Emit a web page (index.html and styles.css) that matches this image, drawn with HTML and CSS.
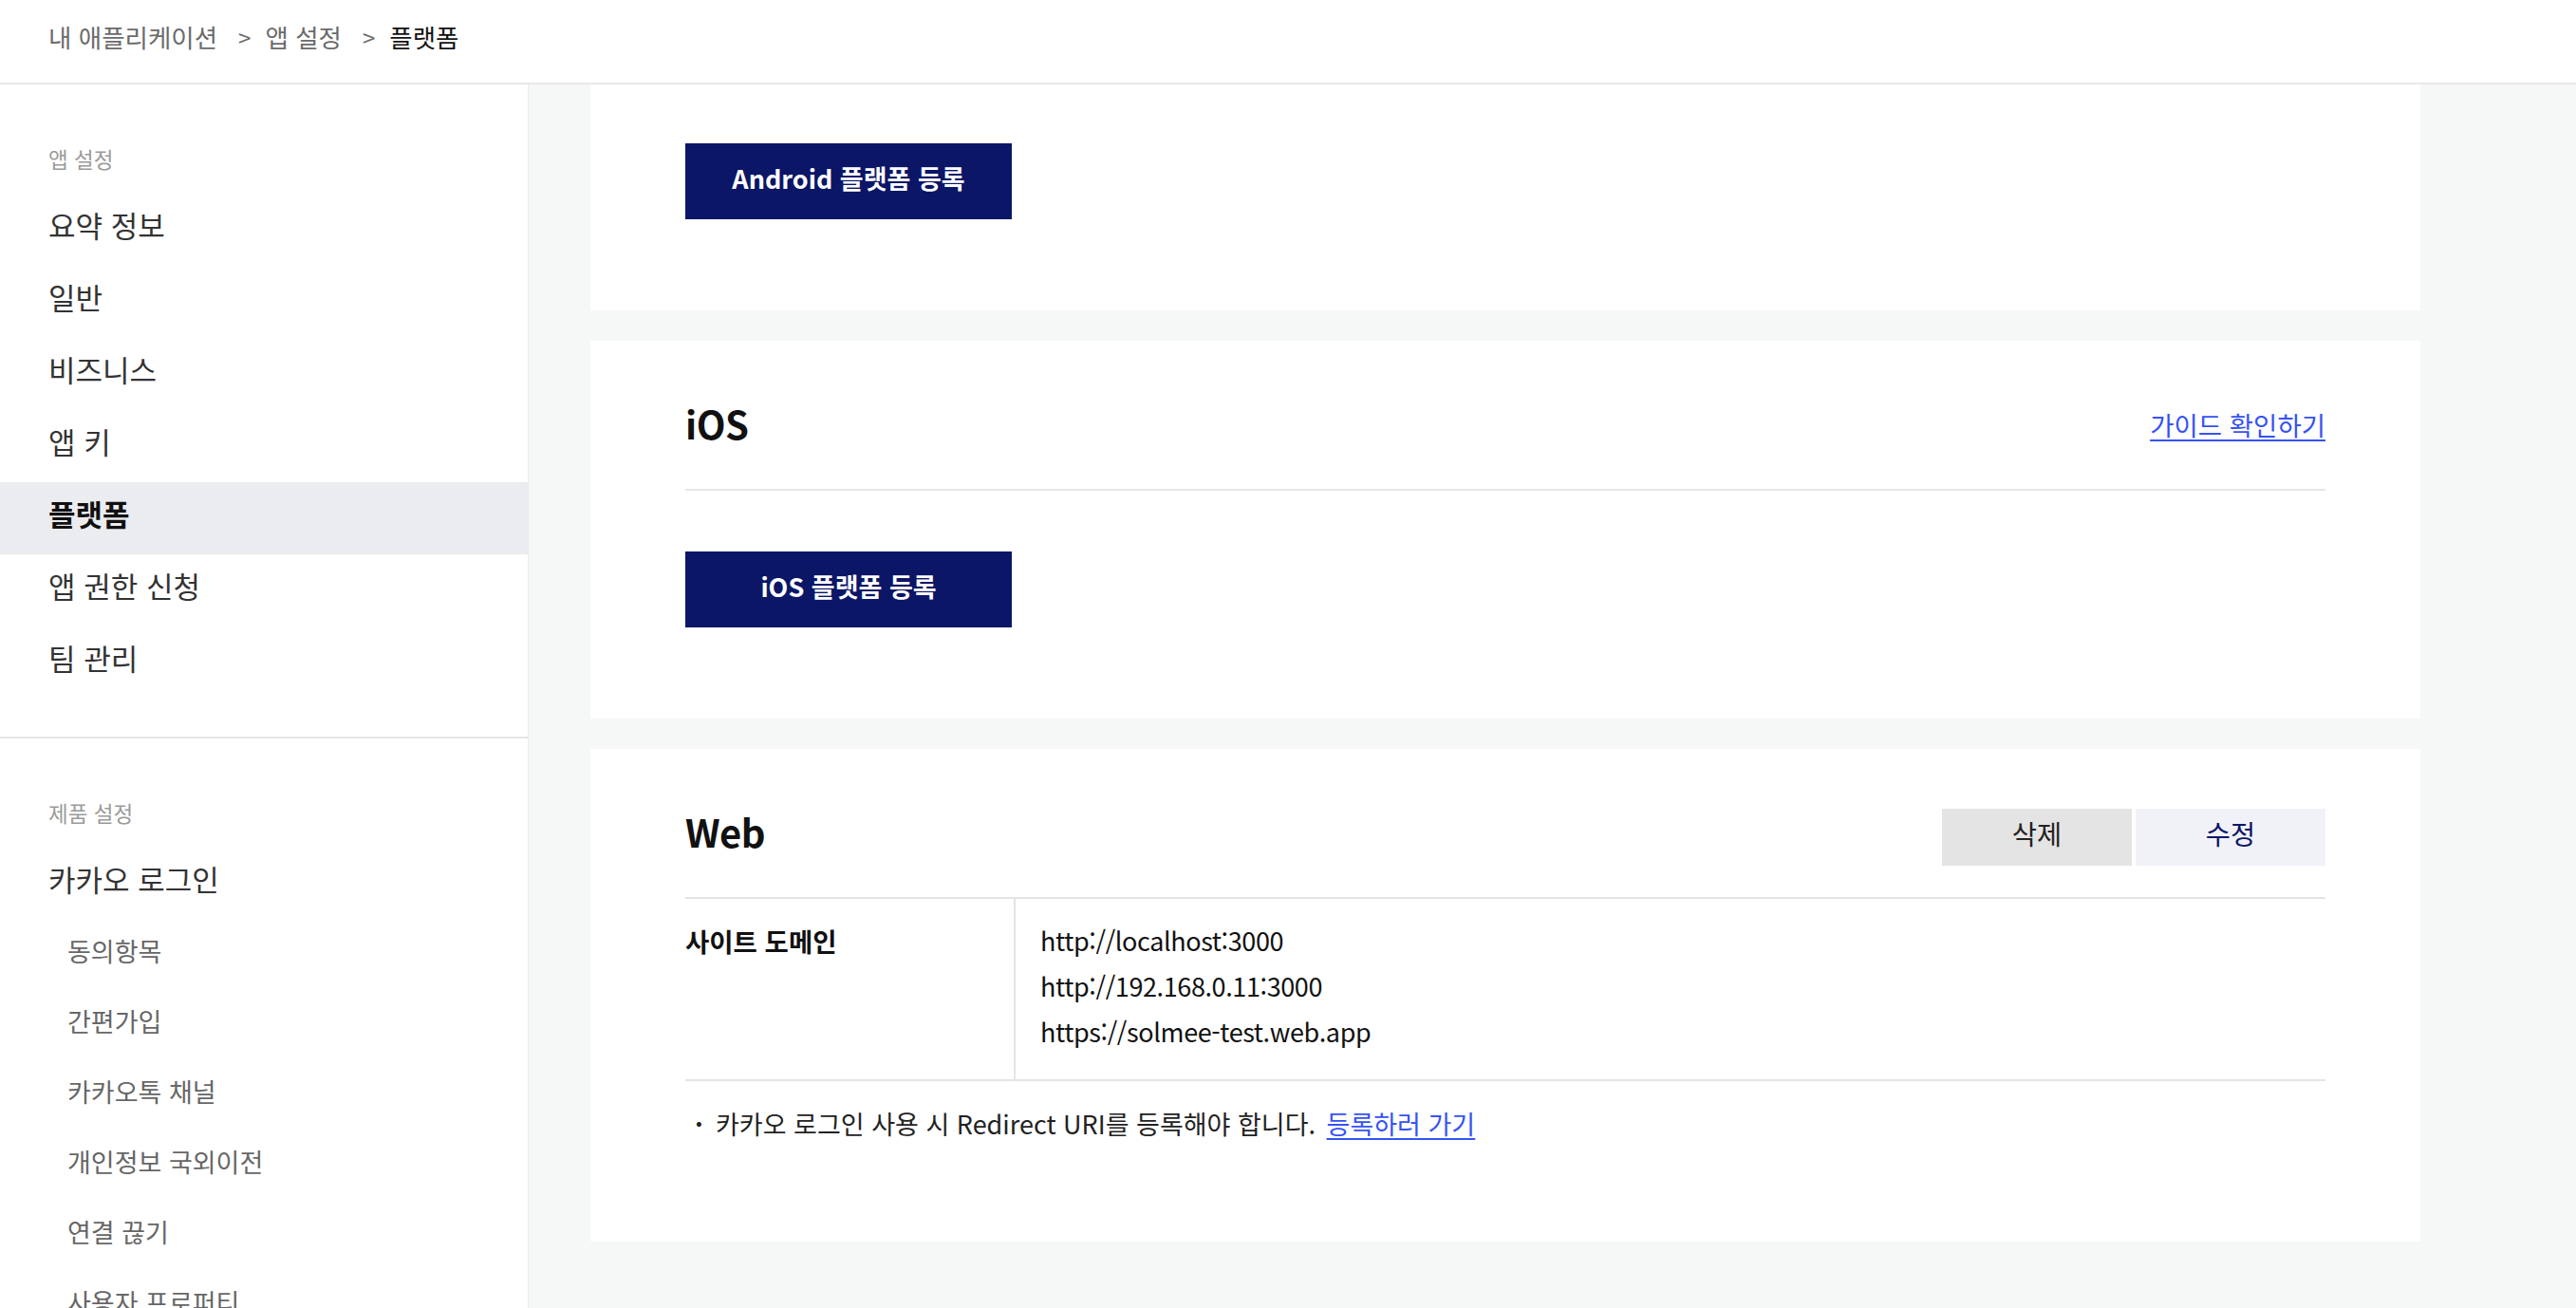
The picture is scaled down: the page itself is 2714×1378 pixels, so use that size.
FILE: index.html
```html
<!DOCTYPE html>
<html lang="ko">
<head>
<meta charset="utf-8">
<title>플랫폼 - 앱 설정</title>
<link rel="stylesheet" href="styles.css">
</head>
<body>
<div class="page">
  <header class="topbar">
    <nav class="crumbs">
      <span class="crumb">내 애플리케이션</span>
      <span class="sep">&gt;</span>
      <span class="crumb">앱 설정</span>
      <span class="sep">&gt;</span>
      <span class="crumb current">플랫폼</span>
    </nav>
  </header>
  <div class="layout">
    <aside class="sidebar">
      <section class="side-section">
        <div class="side-label">앱 설정</div>
        <ul class="side-menu">
          <li class="side-item">요약 정보</li>
          <li class="side-item">일반</li>
          <li class="side-item">비즈니스</li>
          <li class="side-item">앱 키</li>
          <li class="side-item active">플랫폼</li>
          <li class="side-item">앱 권한 신청</li>
          <li class="side-item">팀 관리</li>
        </ul>
      </section>
      <section class="side-section">
        <div class="side-label">제품 설정</div>
        <ul class="side-menu">
          <li class="side-item">카카오 로그인</li>
          <li class="side-sub">동의항목</li>
          <li class="side-sub">간편가입</li>
          <li class="side-sub">카카오톡 채널</li>
          <li class="side-sub">개인정보 국외이전</li>
          <li class="side-sub">연결 끊기</li>
          <li class="side-sub">사용자 프로퍼티</li>
        </ul>
      </section>
    </aside>
    <main class="content">
      <section class="card card-first">
        <button class="primary-btn" type="button">Android 플랫폼 등록</button>
      </section>

      <section class="card">
        <div class="card-head with-line">
          <h2 class="card-title">iOS</h2>
          <a class="guide-link" href="#">가이드 확인하기</a>
        </div>
        <button class="primary-btn spaced" type="button">iOS 플랫폼 등록</button>
      </section>

      <section class="card card-web">
        <div class="card-head">
          <h2 class="card-title">Web</h2>
          <div class="head-actions">
            <button class="ghost-btn delete" type="button">삭제</button>
            <button class="ghost-btn edit" type="button">수정</button>
          </div>
        </div>
        <div class="info-table">
          <div class="info-label">사이트 도메인</div>
          <div class="info-value">
            <div>http://localhost:3000</div>
            <div>http://192.168.0.11:3000</div>
            <div>https://solmee-test.web.app</div>
          </div>
        </div>
        <p class="note"><span class="dot">·</span>카카오 로그인 사용 시 Redirect URI를 등록해야 합니다. <a class="note-link" href="#">등록하러 가기</a></p>
      </section>
    </main>
  </div>
</div>
</body>
</html>
```

FILE: styles.css
```css
* { box-sizing: border-box; }

html, body {
  margin: 0;
  padding: 0;
  height: 100%;
  overflow: hidden;
}

body {
  font-family: "Noto Sans CJK KR", "Noto Sans", sans-serif;
  color: #222;
  background: #ffffff;
}

.page {
  height: 100vh;
  display: flex;
  flex-direction: column;
}

/* top bar */
.topbar {
  height: 89px;
  flex: none;
  border-bottom: 2px solid #e8e8e8;
  padding-left: 51px;
  background: #fff;
}

.crumbs {
  display: flex;
  align-items: center;
  height: 77px;
  font-size: 26.5px;
  color: #6b6b6b;
}

.sep {
  margin: 0 15px 0 22px;
  font-size: 24px;
  color: #6b6b6b;
}

.crumb.current {
  color: #111;
  font-weight: 400;
}

/* layout */
.layout {
  flex: 1;
  display: flex;
  min-height: 0;
}

.sidebar {
  width: 557px;
  flex: none;
  border-right: 1px solid #ebebeb;
  background: #fff;
  overflow: hidden;
}

.side-section {
  padding-top: 63px;
  padding-bottom: 40px;
  border-bottom: 2px solid #e6e6e8;
}

.side-label {
  padding-left: 51px;
  font-size: 22.5px;
  line-height: 30px;
  color: #9a9a9a;
  margin-bottom: 22px;
}

.side-menu {
  list-style: none;
  margin: 0;
  padding: 0;
}

.side-item {
  height: 76px;
  line-height: 66px;
  padding-left: 51px;
  font-size: 31px;
  color: #333;
}

.side-item.active {
  background: #ebecf0;
  color: #111;
  font-weight: 700;
}

.side-sub {
  height: 74px;
  line-height: 66px;
  padding-left: 71px;
  font-size: 27px;
  color: #666;
}

/* content */
.content {
  flex: 1;
  background: #f6f7f7;
  padding: 0 164px 0 65px;
  overflow: hidden;
}

.card {
  background: #fff;
  padding: 60px 100px 96px;
  margin-bottom: 32px;
}

.card-first {
  padding-top: 62px;
}

.card-web {
  padding-bottom: 103px;
}

.card-head {
  display: flex;
  align-items: center;
  justify-content: space-between;
  height: 96px;
  padding-bottom: 36px;
}

.card-head.with-line {
  height: 98px;
  border-bottom: 2px solid #e6e6e6;
}

.card-title {
  margin: 0;
  font-size: 40px;
  line-height: 54px;
  letter-spacing: -0.5px;
  padding-bottom: 6px;
  font-weight: 600;
  color: #111;
}

.guide-link {
  font-size: 27.5px;
  padding-bottom: 4px;
  color: #3552f5;
  text-decoration: underline;
  text-underline-offset: 4px;
}

.primary-btn {
  display: block;
  width: 344px;
  height: 80px;
  border: 0;
  background: #0b1667;
  color: #fff;
  font-family: inherit;
  font-size: 27px;
  font-weight: 700;
  padding: 0 0 8px;
}

.primary-btn.spaced {
  margin-top: 64px;
}

.head-actions {
  display: flex;
  gap: 4px;
  margin-top: 6px;
}

.ghost-btn {
  width: 200px;
  height: 60px;
  border: 0;
  font-family: inherit;
  font-size: 28.5px;
  padding: 0 0 9px;
}

.ghost-btn.delete {
  background: #e4e4e4;
  color: #222;
}

.ghost-btn.edit {
  background: #f1f2f8;
  color: #0b1667;
}

.info-table {
  display: grid;
  grid-template-columns: 348px 1fr;
  border-top: 2px solid #e4e4e4;
  border-bottom: 2px solid #e4e4e4;
}

.info-label {
  border-right: 2px solid #e4e4e4;
  padding-top: 21px;
  font-size: 27.5px;
  line-height: 46px;
  font-weight: 700;
  color: #111;
}

.info-value {
  padding: 20px 0 26px 26px;
  font-size: 27px;
  line-height: 48px;
  letter-spacing: -0.4px;
  color: #111;
}

.note {
  margin: 26px 0 0;
  font-size: 27px;
  line-height: 38px;
  color: #222;
  padding-left: 10px;
  padding-bottom: 2px;
}

.dot {
  display: inline-block;
  width: 22px;
  font-weight: 700;
}

.note-link {
  color: #3552f5;
  text-decoration: underline;
  text-underline-offset: 4px;
  margin-left: 4px;
}
```
